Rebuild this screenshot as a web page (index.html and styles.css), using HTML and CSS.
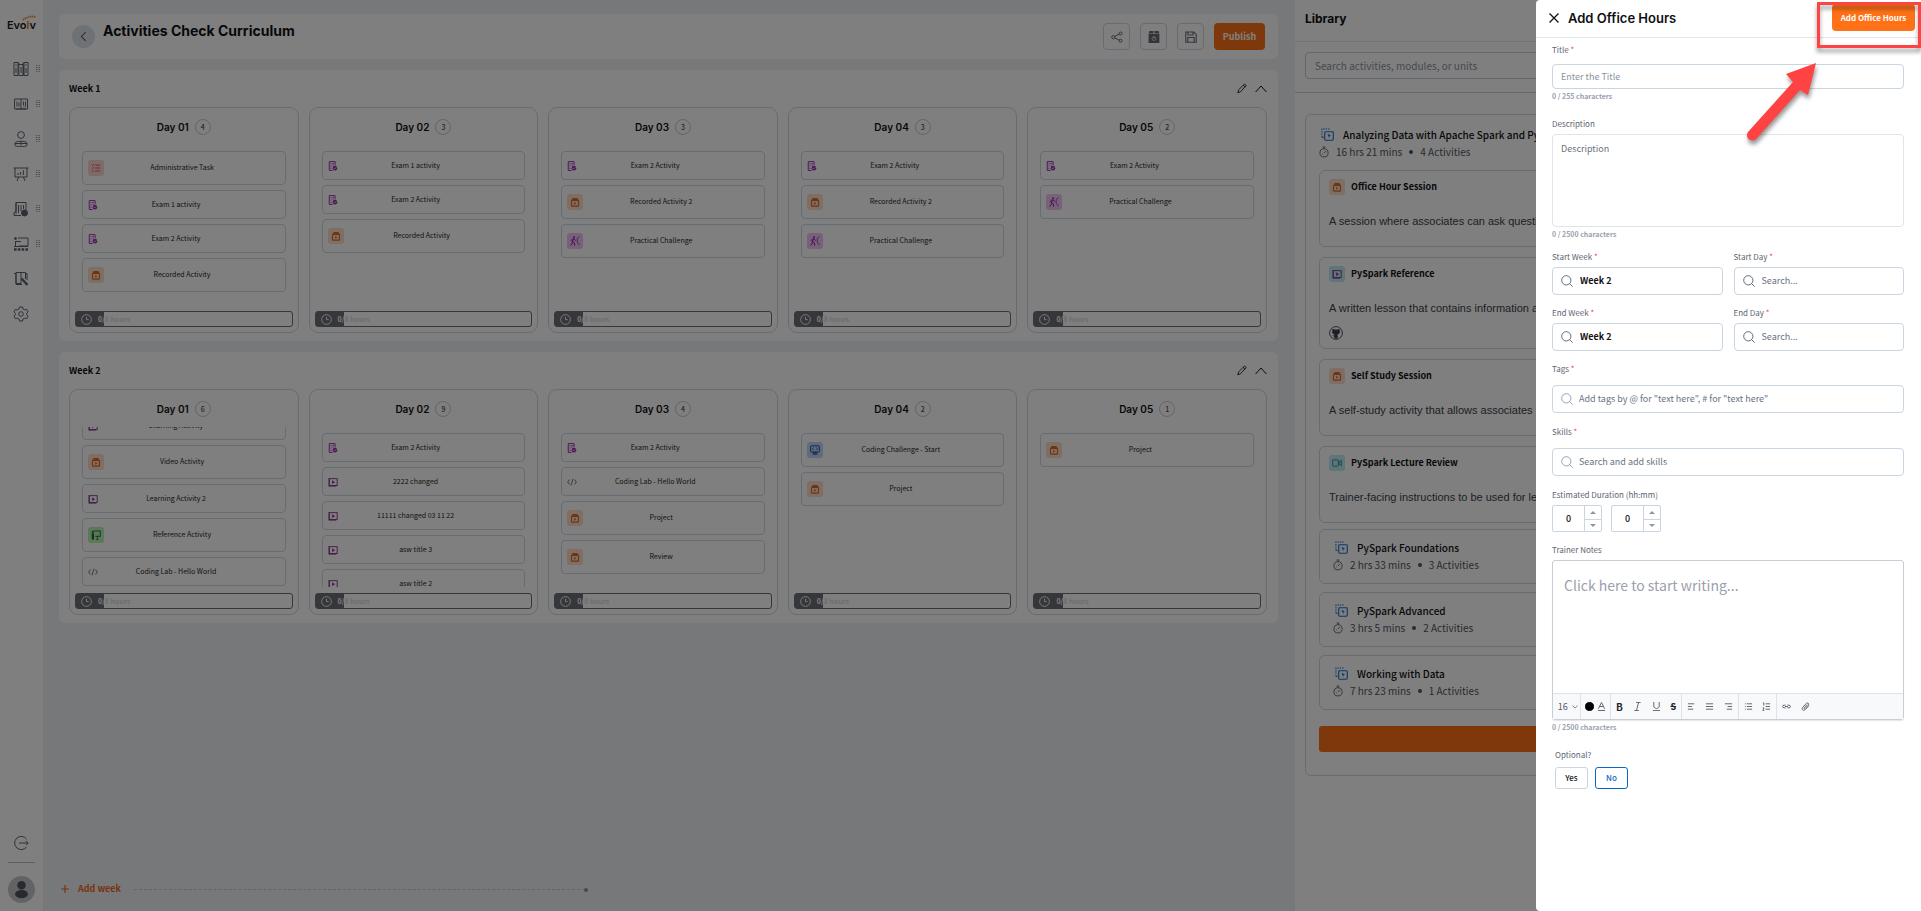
FILE: index.html
```html
<!DOCTYPE html>
<html lang="en">
<head>
    <meta charset="UTF-8">
    <title>Activities Check Curriculum</title>
    <link rel="stylesheet" href="styles.css">
</head>
<body>

    <!-- icon sprite -->
    <svg class="sprite" aria-hidden="true">
        <symbol id="i-exam" viewBox="0 0 12 12"><path d="M1.5 .7h7v4.5M1.5 .7v10.6h4" fill="none" stroke="currentColor" stroke-width="1.2"/><path d="M3 3h1.2M5.2 3h2M3 5h1.2M5.2 5h1.6M3 7h1.2M3 9h1.2" stroke="currentColor"/><circle cx="8.3" cy="8.6" r="2.8" fill="currentColor"/><path d="M6.8 8.5l1.1 1.1 2-2.1" fill="none" stroke="#fff" stroke-width=".8"/></symbol>
        <symbol id="i-play" viewBox="0 0 12 12"><rect x="1.6" y="2" width="9.4" height="8.2" fill="none" stroke="currentColor" stroke-width="1.1"/><path d="M1 1.2v10h9" fill="none" stroke="currentColor" stroke-width=".8"/><path d="M5 4v4.4l3.4-2.2z" fill="currentColor"/></symbol>
        <symbol id="i-rec" viewBox="0 0 12 12"><path d="M3.2 1.2h5.6l1.6 2.6H1.6z" fill="currentColor"/><rect x="1.8" y="4" width="8.4" height="7" rx=".8" fill="none" stroke="currentColor" stroke-width="1.4"/><path d="M5 5.8v3.4l2.6-1.7z" fill="currentColor"/></symbol>
        <symbol id="i-task" viewBox="0 0 12 12"><path d="M1 2.4l.8.8 1.5-1.7M1 6l.8.8L3.3 5M1 9.6l.8.8 1.5-1.7M5 2.5h6M5 6h6M5 9.6h6" fill="none" stroke="currentColor" stroke-width="1.1"/></symbol>
        <symbol id="i-climb" viewBox="0 0 12 12"><circle cx="5" cy="1.4" r="1.1" fill="currentColor"/><path d="M4.6 2.8L3 6.2l2.2 2 .4 3.4M3 6.2L2.6 9 .8 11.4M4.6 3l2.2 2.6M1 5.6l2.4-2.2" fill="none" stroke="currentColor" stroke-width="1.2"/><path d="M11.4.8L8.6 3v4l2.8 4" fill="none" stroke="currentColor" stroke-width=".9"/></symbol>
        <symbol id="i-code" viewBox="0 0 12 12"><path d="M3 3L.8 6 3 9M9 3l2.2 3L9 9M7.2 2L4.8 10" fill="none" stroke="currentColor"/></symbol>
        <symbol id="i-ref" viewBox="0 0 12 12"><path d="M3.6 1.2h7.6v6.4H5" fill="none" stroke="currentColor" stroke-width="1.1"/><path d="M7.6 7.6v3.6M6 11.2h3.2" stroke="currentColor" stroke-width=".9"/><circle cx="2.2" cy="2.2" r="1.3" fill="currentColor"/><path d="M.8 4h2.8v7.4H1z" fill="currentColor"/></symbol>
        <symbol id="i-screen" viewBox="0 0 12 12"><rect x=".8" y="1" width="10.4" height="7.6" rx=".8" fill="none" stroke="currentColor" stroke-width="1.2"/><path d="M4.4 3L3 4.7l1.4 1.7M7.6 3L9 4.7 7.6 6.4M4.4 8.6h3.2v2H4.4zM3 11h6" fill="none" stroke="currentColor"/></symbol>
        <symbol id="i-video" viewBox="0 0 12 12"><rect x=".8" y="2.2" width="6.8" height="7.6" rx=".8" fill="none" stroke="currentColor"/><path d="M8.4 5l2.8-2.2v6.4L8.4 7z" fill="none" stroke="currentColor"/></symbol>
        <symbol id="i-clock" viewBox="0 0 12 12"><circle cx="6" cy="6" r="5.3" fill="none" stroke="currentColor"/><path d="M6 3v3.2h2.4" fill="none" stroke="currentColor"/></symbol>
        <symbol id="i-module" viewBox="0 0 14 14"><path d="M1 10V1h9" fill="none" stroke="currentColor" stroke-width="1.1" stroke-dasharray="1.6 1"/><path d="M1 10h2" stroke="currentColor"/><rect x="4" y="4" width="9.2" height="9.2" rx="1" fill="none" stroke="currentColor" stroke-width="1.2"/><path d="M7 6.2l3.8 1.8-1.5.5L8.8 11z" fill="currentColor"/></symbol>
        <symbol id="i-timer" viewBox="0 0 12 14"><circle cx="6" cy="8" r="4.9" fill="none" stroke="currentColor"/><path d="M4.4 1h3.2M6 1v2M6 8.2l2-2.4M4 9l1 .8" fill="none" stroke="currentColor"/></symbol>
        <symbol id="i-search" viewBox="0 0 14 14"><circle cx="6.2" cy="6.2" r="5.4" fill="none" stroke="currentColor"/><path d="M10 10l3.6 3.6" stroke="currentColor"/></symbol>
        <symbol id="i-pencil" viewBox="0 0 12 12"><path d="M1 11l.9-3.4L8.6 1c.8-.7 2.8.9 2.1 1.9L4.2 9.9z" fill="none" stroke="currentColor"/><path d="M7.4 2.2l2.4 2M1 11l1.4-.4" stroke="currentColor"/></symbol>
        <symbol id="i-up" viewBox="0 0 12 8"><path d="M.6 7L6 1l5.4 6" fill="none" stroke="currentColor"/></symbol>
        <symbol id="i-dots" viewBox="0 0 5 9"><path d="M1 0v9M4 0v9" stroke="currentColor" stroke-width="1.300" stroke-dasharray="1.200 1.400"/></symbol>
    </svg>

    <div class="app">
        <aside class="sidebar">
            <div class="logo">Evo<span>l</span>v
                <svg viewBox="0 0 16 6"><path d="M1 5Q8 0 15 2" fill="none" stroke="#f0902c" stroke-width="2" stroke-dasharray="1.4 .7"/></svg>
            </div>
            <nav>
                <a href="#" aria-label="Curriculum"><svg viewBox="0 0 16 16"><path d="M1 1.5h4v13H1zM5.8 1.5v13M10.2 1.5v13M11 1.5h4v13h-4zM5.8 3.5h4.4v11H5.8M2.3 4h1.4M12.3 4h1.4M3 7v5M13 7v5M8 6v6"/></svg><svg class="dots"><use href="#i-dots"/></svg></a>
                <a href="#" aria-label="Modules"><svg viewBox="0 0 16 16"><path d="M1.5 3h13v10h-13zM8 3v10M4 5.500v5M6 6.5v4M10.5 5.500v4M12.5 5.500v5M10.5 11h1M3 13h10"/></svg><svg class="dots"><use href="#i-dots"/></svg></a>
                <a href="#" aria-label="Users"><svg viewBox="0 0 16 16"><circle cx="8" cy="4" r="3.4"/><path d="M2 14.5v-2c0-3 12-3 12 0v2c-2 1.6-10 1.6-12 0zM8 10.5v4M2 12.5h12"/></svg><svg class="dots"><use href="#i-dots"/></svg></a>
                <a href="#" aria-label="Reports"><svg viewBox="0 0 16 16"><path d="M.5 2h15M2 2v9h12V2M5.6 11L4 15M10.4 11l1.6 4M5 9V7M7.6 9V6M10.4 9V4.4"/></svg><svg class="dots"><use href="#i-dots"/></svg></a>
                <a href="#" aria-label="Exams"><svg viewBox="0 0 16 16"><path d="M3 13V1.5h10V9M3 1.5v9l-2 1v3h7M5.5 4v8M8 4v6M10.5 4v4"/><circle cx="11.5" cy="12" r="3" class="solid"/></svg><svg class="dots"><use href="#i-dots"/></svg></a>
                <a href="#" aria-label="Training"><svg viewBox="0 0 16 16"><path d="M5 2h10v8H6M2.5 5v5M2.5 5.5H8"/><circle cx="2.5" cy="2.5" r="1" class="solid"/><path d="M1 10.500h14"/><path d="M1 13.5h14" stroke-width="2.500" stroke-dasharray="2.6 1.2"/></svg><svg class="dots"><use href="#i-dots"/></svg></a>
                <a href="#" aria-label="Assignments"><svg viewBox="0 0 16 16"><path d="M1 2.5h2v11h6M3 1.5h5v11H3zM8 1.5h4.5V8M12.5 2.5H14V9"/><path d="M8.5 7.5l6 6.5" stroke-width="2.4"/></svg></a>
                <a href="#" aria-label="Settings"><svg viewBox="0 0 16 16"><circle cx="8" cy="8" r="2.3"/><path d="M6.5 1h3l.5 2 1.6.9 2-.6 1.5 2.6L13.600 7.300v1.400l1.500 1.400-1.500 2.600-2-.6L10 13l-.5 2h-3L6 13l-1.600-.9-2 .6L.9 10.100l1.500-1.400V7.300L.9 5.900l1.500-2.600 2 .6L6 3z"/></svg></a>
            </nav>
            <a href="#" class="logout" aria-label="Log out"><svg viewBox="0 0 16 16"><path d="M13.500 4A6.600 6.600 0 1 0 13.500 12M6 8h9M13 5.800L15.200 8 13 10.200"/></svg></a>
            <div class="avatar"><svg viewBox="0 0 28 28"><circle cx="14" cy="9.500" r="4.400"/><ellipse cx="14" cy="18.800" rx="6.600" ry="4.200"/></svg></div>
        </aside>

        <main class="main">
            <header class="page-head">
                <button class="back" aria-label="Back"><svg viewBox="0 0 8 12"><path d="M6.500 1L1.500 6l5 5" fill="none" stroke="currentColor" stroke-width="1.300"/></svg></button>
                <h1>Activities Check Curriculum</h1>
                <button class="tool" aria-label="Share"><svg viewBox="0 0 12 12"><g fill="none" stroke="currentColor"><circle cx="2.300" cy="6.200" r="1.600"/><circle cx="9.600" cy="2.500" r="1.500"/><circle cx="9.600" cy="9.700" r="1.500"/><path d="M3.700 5.400l4.500-2.300M3.700 7l4.500 2.200"/></g></svg></button>
                <button class="tool" aria-label="Archive"><svg viewBox="0 0 12 12"><path d="M1.500 0h4v2.500H.6zM6.500 0h4l.9 2.500H6.500zM.6 3.100h10.800V12H.6z" fill="currentColor"/><circle cx="6" cy="7.600" r="1.900" fill="none" stroke="#fff" stroke-width=".6"/><path d="M6 5.500v2.200" stroke="#fff" stroke-width=".6"/></svg></button>
                <button class="tool" aria-label="Save"><svg viewBox="0 0 12 12"><path d="M.8 1h8L11.200 3.400V11.200H.8zM3 1v3h5V1M2.800 11V6.500h6.400V11" fill="none" stroke="currentColor" stroke-width="1.100"/></svg></button>
                <button class="publish">Publish</button>
            </header>

            <section class="week">
                <div class="week-head">
                    <h2>Week 1</h2>
                    <button aria-label="Edit week"><svg class="pencil"><use href="#i-pencil"/></svg></button>
                    <button aria-label="Collapse week"><svg class="up"><use href="#i-up"/></svg></button>
                </div>
                <div class="days">
                    <article class="day">
                        <h3>Day 01 <span class="count">4</span></h3>
                        <ul>
                            <li class="tall"><i class="tile red"><svg><use href="#i-task"/></svg></i><span>Administrative Task</span></li>
                            <li><svg class="exam"><use href="#i-exam"/></svg><span>Exam 1 activity</span></li>
                            <li><svg class="exam"><use href="#i-exam"/></svg><span>Exam 2 Activity</span></li>
                            <li class="tall"><i class="tile orange"><svg><use href="#i-rec"/></svg></i><span>Recorded Activity</span></li>
                        </ul>
                        <div class="hours"><svg><use href="#i-clock"/></svg><b>0/<span>8 hours</span></b></div>
                    </article>
                    <article class="day">
                        <h3>Day 02 <span class="count">3</span></h3>
                        <ul>
                            <li><svg class="exam"><use href="#i-exam"/></svg><span>Exam 1 activity</span></li>
                            <li><svg class="exam"><use href="#i-exam"/></svg><span>Exam 2 Activity</span></li>
                            <li class="tall"><i class="tile orange"><svg><use href="#i-rec"/></svg></i><span>Recorded Activity</span></li>
                        </ul>
                        <div class="hours"><svg><use href="#i-clock"/></svg><b>0/<span>8 hours</span></b></div>
                    </article>
                    <article class="day">
                        <h3>Day 03 <span class="count">3</span></h3>
                        <ul>
                            <li><svg class="exam"><use href="#i-exam"/></svg><span>Exam 2 Activity</span></li>
                            <li class="tall"><i class="tile orange"><svg><use href="#i-rec"/></svg></i><span>Recorded Activity 2</span></li>
                            <li class="tall"><i class="tile purple"><svg><use href="#i-climb"/></svg></i><span>Practical Challenge</span></li>
                        </ul>
                        <div class="hours"><svg><use href="#i-clock"/></svg><b>0/<span>8 hours</span></b></div>
                    </article>
                    <article class="day">
                        <h3>Day 04 <span class="count">3</span></h3>
                        <ul>
                            <li><svg class="exam"><use href="#i-exam"/></svg><span>Exam 2 Activity</span></li>
                            <li class="tall"><i class="tile orange"><svg><use href="#i-rec"/></svg></i><span>Recorded Activity 2</span></li>
                            <li class="tall"><i class="tile purple"><svg><use href="#i-climb"/></svg></i><span>Practical Challenge</span></li>
                        </ul>
                        <div class="hours"><svg><use href="#i-clock"/></svg><b>0/<span>8 hours</span></b></div>
                    </article>
                    <article class="day">
                        <h3>Day 05 <span class="count">2</span></h3>
                        <ul>
                            <li><svg class="exam"><use href="#i-exam"/></svg><span>Exam 2 Activity</span></li>
                            <li class="tall"><i class="tile purple"><svg><use href="#i-climb"/></svg></i><span>Practical Challenge</span></li>
                        </ul>
                        <div class="hours"><svg><use href="#i-clock"/></svg><b>0/<span>8 hours</span></b></div>
                    </article>
                </div>
            </section>

            <section class="week">
                <div class="week-head">
                    <h2>Week 2</h2>
                    <button aria-label="Edit week"><svg class="pencil"><use href="#i-pencil"/></svg></button>
                    <button aria-label="Collapse week"><svg class="up"><use href="#i-up"/></svg></button>
                </div>
                <div class="days">
                    <article class="day">
                        <h3>Day 01 <span class="count">6</span></h3>
                        <ul class="at-end">
                            <li><svg class="play"><use href="#i-play"/></svg><span>Learning Activity</span></li>
                            <li class="tall"><i class="tile orange"><svg><use href="#i-rec"/></svg></i><span>Video Activity</span></li>
                            <li><svg class="play"><use href="#i-play"/></svg><span>Learning Activity 2</span></li>
                            <li class="tall"><i class="tile green"><svg><use href="#i-ref"/></svg></i><span>Reference Activity</span></li>
                            <li><svg class="code"><use href="#i-code"/></svg><span>Coding Lab - Hello World</span></li>
                        </ul>
                        <div class="hours"><svg><use href="#i-clock"/></svg><b>0/<span>8 hours</span></b></div>
                    </article>
                    <article class="day">
                        <h3>Day 02 <span class="count">9</span></h3>
                        <ul>
                            <li><svg class="exam"><use href="#i-exam"/></svg><span>Exam 2 Activity</span></li>
                            <li><svg class="play"><use href="#i-play"/></svg><span>2222 changed</span></li>
                            <li><svg class="play"><use href="#i-play"/></svg><span>11111 changed 03 11 22</span></li>
                            <li><svg class="play"><use href="#i-play"/></svg><span>asw title 3</span></li>
                            <li><svg class="play"><use href="#i-play"/></svg><span>asw title 2</span></li>
                        </ul>
                        <div class="hours"><svg><use href="#i-clock"/></svg><b>0/<span>8 hours</span></b></div>
                    </article>
                    <article class="day">
                        <h3>Day 03 <span class="count">4</span></h3>
                        <ul>
                            <li><svg class="exam"><use href="#i-exam"/></svg><span>Exam 2 Activity</span></li>
                            <li><svg class="code"><use href="#i-code"/></svg><span>Coding Lab - Hello World</span></li>
                            <li class="tall"><i class="tile orange"><svg><use href="#i-rec"/></svg></i><span>Project</span></li>
                            <li class="tall"><i class="tile orange"><svg><use href="#i-rec"/></svg></i><span>Review</span></li>
                        </ul>
                        <div class="hours"><svg><use href="#i-clock"/></svg><b>0/<span>8 hours</span></b></div>
                    </article>
                    <article class="day">
                        <h3>Day 04 <span class="count">2</span></h3>
                        <ul>
                            <li class="tall"><i class="tile blue"><svg><use href="#i-screen"/></svg></i><span>Coding Challenge - Start</span></li>
                            <li class="tall"><i class="tile orange"><svg><use href="#i-rec"/></svg></i><span>Project</span></li>
                        </ul>
                        <div class="hours"><svg><use href="#i-clock"/></svg><b>0/<span>8 hours</span></b></div>
                    </article>
                    <article class="day">
                        <h3>Day 05 <span class="count">1</span></h3>
                        <ul>
                            <li class="tall"><i class="tile orange"><svg><use href="#i-rec"/></svg></i><span>Project</span></li>
                        </ul>
                        <div class="hours"><svg><use href="#i-clock"/></svg><b>0/<span>8 hours</span></b></div>
                    </article>
                </div>
            </section>

            <div class="add-week">
                <button><svg viewBox="0 0 8 8"><path d="M4 0v8M0 4h8" stroke="currentColor" stroke-width="1.200"/></svg>Add week</button>
                <div class="dash"></div>
            </div>
        </main>

        <section class="library">
            <h2>Library</h2>
            <div class="library-search">
                <input type="search" placeholder="Search activities, modules, or units" aria-label="Search library">
            </div>
            <div class="unit">
                <h3 class="module-head"><svg><use href="#i-module"/></svg>Analyzing Data with Apache Spark and Pyt</h3>
                <p class="meta"><svg><use href="#i-timer"/></svg>16 hrs 21 mins<i></i>4 Activities</p>
                <div class="sessions">
                    <article class="session">
                        <h4><i class="tile orange"><svg><use href="#i-rec"/></svg></i>Office Hour Session</h4>
                        <p>A session where associates can ask questio</p>
                    </article>
                    <article class="session">
                        <h4><i class="tile teal"><svg class="violet"><use href="#i-play"/></svg></i>PySpark Reference</h4>
                        <p>A written lesson that contains information ab</p>
                        <svg class="github" viewBox="0 0 16 16"><circle cx="8" cy="8" r="7.300" fill="none" stroke="currentColor"/><path d="M4 3l2 1h4l2-1 .4 3.500c0 2-1.300 3-3 3.300.5.500.6 1 .6 2v2.500H6v-2.500c-1.500.3-2-.5-2.500-1.300 1 .2 1.500.5 2.500.3 0-.4.200-.7.500-1C4.800 9.500 3.600 8.500 3.600 6.500z" fill="currentColor"/></svg>
                    </article>
                    <article class="session">
                        <h4><i class="tile orange"><svg><use href="#i-rec"/></svg></i>Self Study Session</h4>
                        <p>A self-study activity that allows associates to</p>
                    </article>
                    <article class="session">
                        <h4><i class="tile teal"><svg><use href="#i-video"/></svg></i>PySpark Lecture Review</h4>
                        <p>Trainer-facing instructions to be used for lec</p>
                    </article>
                </div>
                <div class="modules">
                    <article class="module">
                        <h3 class="module-head"><svg><use href="#i-module"/></svg>PySpark Foundations</h3>
                        <p class="meta"><svg><use href="#i-timer"/></svg>2 hrs 33 mins<i></i>3 Activities</p>
                    </article>
                    <article class="module">
                        <h3 class="module-head"><svg><use href="#i-module"/></svg>PySpark Advanced</h3>
                        <p class="meta"><svg><use href="#i-timer"/></svg>3 hrs 5 mins<i></i>2 Activities</p>
                    </article>
                    <article class="module">
                        <h3 class="module-head"><svg><use href="#i-module"/></svg>Working with Data</h3>
                        <p class="meta"><svg><use href="#i-timer"/></svg>7 hrs 23 mins<i></i>1 Activities</p>
                    </article>
                </div>
                <button class="unit-add" aria-label="Add unit"></button>
            </div>
        </section>
    </div>

    <div class="overlay"></div>

    <form class="drawer">
        <header>
            <button type="button" class="close" aria-label="Close"><svg viewBox="0 0 10 10"><path d="M.5 .5l9 9M9.500 .5l-9 9" stroke="currentColor" stroke-width="1.300"/></svg></button>
            <h2>Add Office Hours</h2>
            <button type="submit" class="submit">Add Office Hours</button>
        </header>

        <div class="drawer-body">
            <div class="field first wide">
                <label for="title">Title <em>*</em></label>
                <input type="text" id="title" class="box low" placeholder="Enter the Title">
                <small>0 / 255 characters</small>
            </div>
            <div class="field">
                <label for="description">Description</label>
                <textarea id="description" class="box" placeholder="Description"></textarea>
                <small>0 / 2500 characters</small>
            </div>
            <div class="pair">
                <div class="field">
                    <label for="start-week">Start Week <em>*</em></label>
                    <div class="box search"><svg><use href="#i-search"/></svg><input type="text" id="start-week" value="Week 2"></div>
                </div>
                <div class="field">
                    <label for="start-day">Start Day <em>*</em></label>
                    <div class="box search"><svg><use href="#i-search"/></svg><input type="text" id="start-day" placeholder="Search..."></div>
                </div>
                <div class="field">
                    <label for="end-week">End Week <em>*</em></label>
                    <div class="box search"><svg><use href="#i-search"/></svg><input type="text" id="end-week" value="Week 2"></div>
                </div>
                <div class="field">
                    <label for="end-day">End Day <em>*</em></label>
                    <div class="box search"><svg><use href="#i-search"/></svg><input type="text" id="end-day" placeholder="Search..."></div>
                </div>
            </div>
            <div class="field roomy">
                <label for="tags">Tags <em>*</em></label>
                <div class="box search thin"><svg><use href="#i-search"/></svg><input type="text" id="tags" placeholder='Add tags by @ for "text here", # for "text here"'></div>
            </div>
            <div class="field roomy">
                <label for="skills">Skills <em>*</em></label>
                <div class="box search thin"><svg><use href="#i-search"/></svg><input type="text" id="skills" placeholder="Search and add skills"></div>
            </div>
            <div class="field">
                <label for="hours">Estimated Duration (hh:mm)</label>
                <div class="duration">
                    <div class="stepper">
                        <input type="number" id="hours" value="0" min="0">
                        <button type="button" class="inc" aria-label="More hours"></button>
                        <button type="button" class="dec" aria-label="Fewer hours"></button>
                    </div>
                    <div class="stepper">
                        <input type="number" value="0" min="0" aria-label="Minutes">
                        <button type="button" class="inc" aria-label="More minutes"></button>
                        <button type="button" class="dec" aria-label="Fewer minutes"></button>
                    </div>
                </div>
            </div>
            <div class="field wide">
                <label for="notes">Trainer Notes</label>
                <div class="editor">
                    <textarea id="notes" placeholder="Click here to start writing..."></textarea>
                    <div class="toolbar">
                        <div class="g-size"><select aria-label="Font size"><option>16</option></select><svg class="caret" viewBox="0 0 8 5"><path d="M.5 .5L4 4 7.500 .5"/></svg></div>
                        <div class="g-color">
                            <button type="button" aria-label="Fill colour"><svg viewBox="0 0 10 10"><circle cx="5" cy="5" r="4.500" class="solid"/></svg></button>
                            <button type="button" aria-label="Text colour"><svg viewBox="0 0 10 10"><path d="M1.500 7.500L5 .5l3.500 7M2.800 5h4.400M1 9.400h8"/></svg></button>
                        </div>
                        <div class="g-style">
                            <button type="button"><b>B</b></button>
                            <button type="button" aria-label="Italic"><svg viewBox="0 0 10 10"><path d="M3.500 .5h5M1.500 9.500h5M6.200 .5L3.800 9.500"/></svg></button>
                            <button type="button" aria-label="Underline"><svg viewBox="0 0 10 10"><path d="M2 0v4.500c0 3.500 6 3.500 6 0V0M1 9.500h8"/></svg></button>
                            <button type="button"><s>S</s></button>
                        </div>
                        <div class="g-align">
                            <button type="button" aria-label="Align left"><svg viewBox="0 0 10 10"><path d="M1 2h7M1 5h4.500M1 8h6"/></svg></button>
                            <button type="button" aria-label="Justify"><svg viewBox="0 0 10 10"><path d="M1 2h8M1 5h8M1 8h8"/></svg></button>
                            <button type="button" aria-label="Align right"><svg viewBox="0 0 10 10"><path d="M1 2h8M4 5h5M3 8h6"/></svg></button>
                        </div>
                        <div class="g-list">
                            <button type="button" aria-label="Bullet list"><svg viewBox="0 0 10 10"><path d="M1 2h1M3.200 2H9M1 5h1M3.200 5H9M1 8h1M3.200 8H9"/></svg></button>
                            <button type="button" aria-label="Numbered list"><svg viewBox="0 0 10 10"><path d="M1 1h1v3M.8 6.500h1.400L1 9.500h1.500M4 2h5M4 5h5M4 8h5"/></svg></button>
                        </div>
                        <div class="g-link">
                            <button type="button" aria-label="Link"><svg viewBox="0 0 10 10"><path d="M4 3.500H2.200c-2 0-2 3 0 3H4M6 3.500h1.800c2 0 2 3 0 3H6M3.300 5h3.400"/></svg></button>
                            <button type="button" aria-label="Attach"><svg viewBox="0 0 10 10"><path d="M8.800 4.200L4.600 8.600C2.600 10.400 0 8 1.800 6L6 1.500c1.500-1.300 3.400.5 2.200 2L4.500 7.300c-.8.700-1.700-.2-1-1L7 2.800"/></svg></button>
                        </div>
                    </div>
                </div>
                <small>0 / 2500 characters</small>
            </div>
            <fieldset class="optional">
                <legend>Optional?</legend>
                <label><input type="radio" name="optional"><span>Yes</span></label>
                <label><input type="radio" name="optional" checked><span>No</span></label>
            </fieldset>
        </div>
    </form>

    <!-- callout pointing at the submit button -->
    <div class="callout"></div>
    <svg class="arrow" viewBox="0 0 80 90"><path d="M72 9L42 20l7 8L4 78c-4 6 4 12 9 6L56 36l8 5z" fill="#ff4343"/></svg>

</body>
</html>
```
FILE: styles.css
```css
* {
    margin: 0;
    padding: 0;
    box-sizing: border-box;
}
body {
    font-family: "Noto Sans CJK SC", sans-serif;
    font-size: 8px;
    line-height: 12px;
    color: #0f1115;
    overflow: hidden;
}
button, input, textarea, select {
    font: inherit;
    color: inherit;
    border: none;
    background: none;
    outline: none;
    min-width: 0;
}
button {
    display: flex;
    align-items: center;
    justify-content: center;
    cursor: pointer;
}
ul {
    list-style: none;
}
svg {
    display: block;
    flex: none;
}
.sprite {
    position: absolute;
    width: 0;
    height: 0;
}
.app {
    display: grid;
    grid-template-columns: 43px 2fr 1fr;
    height: 100vh;
    background: #eef0f4;
}

/* sidebar */
.sidebar {
    display: flex;
    flex-direction: column;
    background: #fff;
    color: #5c6370;
    padding-bottom: 8px;
}
.logo {
    position: relative;
    height: 51px;
    padding-top: 18px;
    text-align: center;
    font: 600 11px/14px Inter, sans-serif;
    color: #222;
}
.logo span {
    color: #f07820;
}
.logo svg {
    position: absolute;
    top: 15px;
    right: 6px;
    width: 15px;
    height: 6px;
}
.sidebar nav {
    flex: 1;
}
.sidebar a {
    display: flex;
    align-items: center;
    gap: 7px;
    height: 35px;
    padding-left: 13px;
    color: inherit;
}
.sidebar a svg {
    width: 16px;
    height: 16px;
    fill: none;
    stroke: currentColor;
}
.sidebar .solid, .toolbar .solid {
    fill: currentColor;
}
.sidebar a .dots {
    width: 4px;
    height: 9px;
}
.avatar {
    margin: 2px 8px 0;
    padding-top: 13px;
    border-top: 1px solid #b4bfcc;
}
.avatar svg {
    width: 27px;
    height: 27px;
    border-radius: 50%;
    background: #c4c6ca;
    fill: #4f545c;
}

/* curriculum */
.main {
    display: flex;
    flex-direction: column;
    gap: 11px;
    padding: 14px 17px 12px 16px;
    min-width: 0;
}
.page-head {
    display: flex;
    align-items: center;
    gap: 10px;
    height: 45px;
    padding: 0 13px;
    border-radius: 6px;
    background: #fff;
}
.page-head h1 {
    flex: 1;
    padding-bottom: 11px;
    margin-left: -2px;
    font: 700 14px/20px Inter, sans-serif;
}
.back {
    width: 23px;
    height: 23px;
    border-radius: 50%;
    background: #dfe5ea;
    color: #5c6370;
}
.back svg {
    width: 7px;
    height: 11px;
}
.tool {
    width: 27px;
    height: 27px;
    border: 1px solid #cdd8e2;
    border-radius: 4px;
    color: #666b75;
}
.tool svg {
    width: 12px;
    height: 12px;
}
.publish {
    width: 51px;
    height: 27px;
    border-radius: 4px;
    background: #ff7117;
    color: #fff;
    font-size: 9px;
    font-weight: 700;
}
.week {
    padding: 0 11px 8px 10px;
    border-radius: 6px;
    background: #fff;
}
.week-head {
    display: flex;
    align-items: center;
    gap: 8px;
    height: 37px;
}
.week-head h2 {
    flex: 1;
    font-size: 9px;
    font-weight: 700;
}
.pencil {
    width: 10px;
    height: 11px;
}
.up {
    width: 12px;
    height: 8px;
}
.days {
    display: grid;
    grid-template-columns: repeat(5, 1fr);
}
.day {
    min-width: 0;
    margin-right: 10px;
    border: 1px solid #cdd8e2;
    border-radius: 9px;
}
.day:last-child {
    margin-right: 0;
}
.day h3 {
    display: flex;
    align-items: center;
    justify-content: center;
    gap: 6px;
    height: 37px;
    font: 600 10px/14px Inter, sans-serif;
}
.count {
    width: 16px;
    border: 1px solid #c3ced9;
    border-radius: 50%;
    text-align: center;
    font: 500 7px/14px "Noto Sans CJK SC", sans-serif;
    color: #4a4f58;
}
.day ul {
    display: flex;
    flex-direction: column;
    gap: 5px;
    height: 160px;
    padding: 6px 12px 0;
    overflow: hidden;
}
.day .at-end {
    justify-content: flex-end;
    padding: 0 12px 1px;
}
.day li {
    display: flex;
    flex: none;
    align-items: center;
    height: 29px;
    padding-left: 5px;
    border: 1px solid #cdd8e2;
    border-radius: 4px;
}
.day li.tall {
    height: 34px;
}
.day li span {
    flex: 0 1 156px;
    padding-bottom: 2px;
    text-align: center;
    font-size: 7px;
    color: #1c1f25;
}
.exam, .play, .code {
    width: 10px;
    height: 10px;
}
.exam {
    color: #a32fb5;
}
.play, .violet {
    color: #83308f;
}
.code {
    color: #555b66;
}
.tile {
    display: flex;
    flex: none;
    align-items: center;
    justify-content: center;
    width: 16px;
    height: 16px;
    border-radius: 3px;
}
.tile svg {
    width: 10px;
    height: 10px;
}
.red {
    background: #ffd4d4;
    color: #e04a4a;
}
.orange {
    background: #ffdcc6;
    color: #dd6a24;
}
.purple {
    background: #f0c2f6;
    color: #8a1f96;
}
.green {
    background: #b6f0b6;
    color: #1b6a29;
}
.blue {
    background: #bcd8fb;
    color: #274f8c;
}
.teal {
    background: #bcebf2;
    color: #23808f;
}
.hours {
    display: flex;
    align-items: center;
    gap: 6px;
    height: 16px;
    margin: 6px 5px 5px;
    padding-left: 5px;
    border: 1px solid #6c6e74;
    border-radius: 3px;
    background: linear-gradient(to right, #6c6e74 13%, #fff 13%);
    color: #fff;
    font-size: 7px;
}
.hours svg {
    width: 11px;
    height: 11px;
}
.hours span {
    color: #d9dbdf;
}
.add-week {
    display: flex;
    align-items: center;
    gap: 13px;
    margin-top: auto;
}
.add-week button {
    gap: 9px;
    height: 20px;
    padding-left: 2px;
    color: #f06a1c;
    font-size: 9px;
    font-weight: 700;
}
.add-week svg {
    width: 8px;
    height: 8px;
}
.dash {
    position: relative;
    width: 37%;
    border-top: 1px dashed #c9cbd0;
}
.dash::after {
    content: "";
    position: absolute;
    right: -3px;
    top: -2px;
    width: 4px;
    height: 4px;
    border-radius: 50%;
    background: #8e9198;
}

/* library */
.library {
    background: #fff;
    overflow: hidden;
}
.library > h2 {
    height: 42px;
    padding: 11px 10px;
    border-bottom: 1px solid #e4e7ec;
    font: 700 12px/16px Inter, sans-serif;
}
.library-search {
    padding: 10px 10px 13px;
    border-bottom: 1px solid #c8d3e2;
}
.library-search input {
    display: block;
    width: 100%;
    height: 27px;
    padding: 0 9px;
    border: 1px solid #c5d0dc;
    border-radius: 4px;
    font-size: 10px;
}
.unit {
    margin: 21px 10px;
    padding: 11px 13px 23px;
    border: 1px solid #cdd8e2;
    border-radius: 6px;
}
.module-head, .meta {
    display: flex;
    align-items: center;
    height: 17px;
    white-space: nowrap;
}
.module-head {
    gap: 9px;
    padding-left: 2px;
    font-size: 10px;
    font-weight: 500;
}
.module-head svg {
    width: 13px;
    height: 13px;
    color: #1a6fd0;
}
.meta {
    gap: 7px;
    font-size: 10px;
    color: #4f5561;
}
.meta svg {
    width: 10px;
    height: 12px;
}
.meta i {
    width: 4px;
    height: 4px;
    border-radius: 50%;
    background: #4f5561;
}
.sessions {
    display: flex;
    flex-direction: column;
    gap: 10px;
    margin: 10px 0 6px;
}
.session {
    min-height: 77px;
    padding: 8px 9px;
    border: 1px solid #cdd8e2;
    border-radius: 6px;
}
.session h4 {
    display: flex;
    align-items: center;
    gap: 6px;
    font-size: 9px;
    font-weight: 700;
}
.session p {
    margin-top: 19px;
    font: 11px/15px "Liberation Sans", sans-serif;
    color: #3a3f49;
    white-space: nowrap;
}
.github {
    width: 14px;
    height: 14px;
    margin-top: 10px;
    color: #3a3f49;
}
.modules {
    display: flex;
    flex-direction: column;
    gap: 8px;
}
.module {
    padding: 9px 13px 10px;
    border: 1px solid #cdd8e2;
    border-radius: 6px;
}
.unit-add {
    width: 100%;
    height: 26px;
    margin-top: 16px;
    border-radius: 3px;
    background: #ff7117;
}

.overlay {
    position: fixed;
    inset: 0;
    background: rgba(0, 0, 0, 0.5);
}

/* drawer */
.drawer {
    position: fixed;
    top: 0;
    right: 0;
    bottom: 0;
    width: 385px;
    border-radius: 4px 0 0 4px;
    background: #fff;
}
.drawer header {
    display: flex;
    align-items: center;
    height: 38px;
    padding: 0 6px 2px 13px;
    border-bottom: 1px solid #e3e5e8;
}
.close svg {
    width: 10px;
    height: 10px;
}
.drawer h2 {
    flex: 1;
    margin-left: 9px;
    font: 600 13px/18px Inter, sans-serif;
}
.submit {
    width: 83px;
    height: 27px;
    border-radius: 4px;
    background: #ff7117;
    color: #fff;
    font-weight: 700;
}
.drawer-body {
    padding: 6px 17px 0 16px;
}
.field {
    margin-bottom: 12px;
}
.field.roomy {
    margin-bottom: 13px;
}
.field.wide {
    margin-bottom: 17px;
}
.field > label {
    display: block;
    margin-bottom: 4px;
    color: #5d6471;
}
.first > label {
    margin-bottom: 8px;
}
.roomy > label {
    margin-bottom: 10px;
}
em {
    color: #ef4444;
    font-style: normal;
}
small {
    display: block;
    margin-top: 2px;
    font-size: 7px;
    font-weight: 700;
    line-height: 10px;
    color: #9aa1af;
}
.box {
    display: block;
    width: 100%;
    height: 28px;
    border: 1px solid #c9d5e1;
    border-radius: 4px;
    font-size: 9px;
}
.box.low {
    height: 25px;
    padding: 0 8px;
}
textarea {
    resize: none;
}
textarea.box {
    height: 93px;
    padding: 8px;
    border-color: #e0e4e8;
}
::placeholder {
    color: #6b7280;
    opacity: 1;
}
#title::placeholder, .library-search ::placeholder {
    color: #8b92a0;
}
.box.search {
    display: flex;
    align-items: center;
    gap: 7px;
    padding: 0 8px;
}
.box.thin {
    gap: 6px;
}
.box.search svg {
    width: 12px;
    height: 12px;
    color: #4b5563;
}
.box.thin svg {
    color: #8b92a0;
}
.box.search input {
    flex: 1;
    font-weight: 700;
}
.box.search ::placeholder {
    font-weight: 400;
}
.pair {
    display: grid;
    grid-template-columns: repeat(2, minmax(0, 1fr));
    column-gap: 11px;
}
.duration {
    display: flex;
    gap: 9px;
}
.stepper {
    display: grid;
    grid-template: 1fr 1fr / 1fr 17px;
    width: 50px;
    height: 27px;
    border: 1px solid #c9d5e1;
    border-radius: 2px;
}
.stepper input {
    grid-row: span 2;
    text-align: center;
    font-size: 9px;
    font-weight: 500;
    appearance: textfield;
}
.stepper input::-webkit-inner-spin-button {
    display: none;
}
.stepper button {
    border-left: 1px solid #c9d5e1;
}
.stepper .dec {
    border-top: 1px solid #c9d5e1;
}
.stepper button::before {
    content: "";
    border: 3px solid transparent;
    border-top: none;
    border-bottom: 3px solid #8f96a3;
}
.stepper .dec::before {
    border-top: 3px solid #8f96a3;
    border-bottom: none;
}
.editor {
    height: 160px;
    display: flex;
    flex-direction: column;
    border: 1px solid #c9ced6;
    border-radius: 3px;
    box-shadow: 0 1px 1px #e3e6ea;
}
.editor textarea {
    flex: 1;
    padding: 14px 11px;
    font-size: 14px;
    line-height: 20px;
}
.editor ::placeholder {
    color: #9ba1ad;
}
.toolbar {
    display: flex;
    height: 26px;
    border-top: 1px solid #dfe3e8;
    background: #f8f9fb;
    color: #555b66;
}
.toolbar > div {
    display: flex;
    align-items: center;
    justify-content: space-around;
    border-right: 1px solid #dfe3e8;
}
.toolbar svg {
    width: 9px;
    height: 9px;
    fill: none;
    stroke: currentColor;
}
.toolbar select {
    width: 11px;
    appearance: none;
    font-size: 9px;
}
.toolbar .caret {
    width: 6px;
    height: 4px;
}
.toolbar b, .toolbar s {
    font-size: 10px;
    font-weight: 700;
    color: #23262c;
}
.toolbar s {
    font-size: 9px;
}
.toolbar .g-size {
    width: 28px;
    padding-left: 3px;
}
.toolbar .g-color {
    width: 30px;
    padding: 0 2px;
}
.g-color button:first-child {
    color: #000;
}
.g-style {
    width: 71px;
}
.g-align {
    width: 57px;
}
.g-list {
    width: 38px;
}
.toolbar .g-link {
    width: 38px;
    border-right: none;
}
.optional {
    display: flex;
    gap: 7px;
    margin-left: 3px;
    border: none;
}
.optional legend {
    margin-bottom: 6px;
    color: #5d6471;
}
.optional input {
    position: absolute;
    opacity: 0;
}
.optional span {
    display: block;
    width: 33px;
    border: 1px solid #c9d5e1;
    border-radius: 3px;
    text-align: center;
    font-weight: 500;
    line-height: 20px;
}
.optional input:checked + span {
    border-color: #0a66c8;
    color: #0a66c8;
}

/* callout */
.callout {
    position: fixed;
    top: 2px;
    right: 0;
    width: 104px;
    height: 46px;
    border: 3px solid #ff4343;
    filter: drop-shadow(0 4px 2px rgba(0, 0, 0, 0.4));
    pointer-events: none;
}
.arrow {
    position: fixed;
    top: 54px;
    right: 97px;
    width: 80px;
    height: 90px;
    filter: drop-shadow(1px 4px 2px rgba(0, 0, 0, 0.4));
    pointer-events: none;
}
```
